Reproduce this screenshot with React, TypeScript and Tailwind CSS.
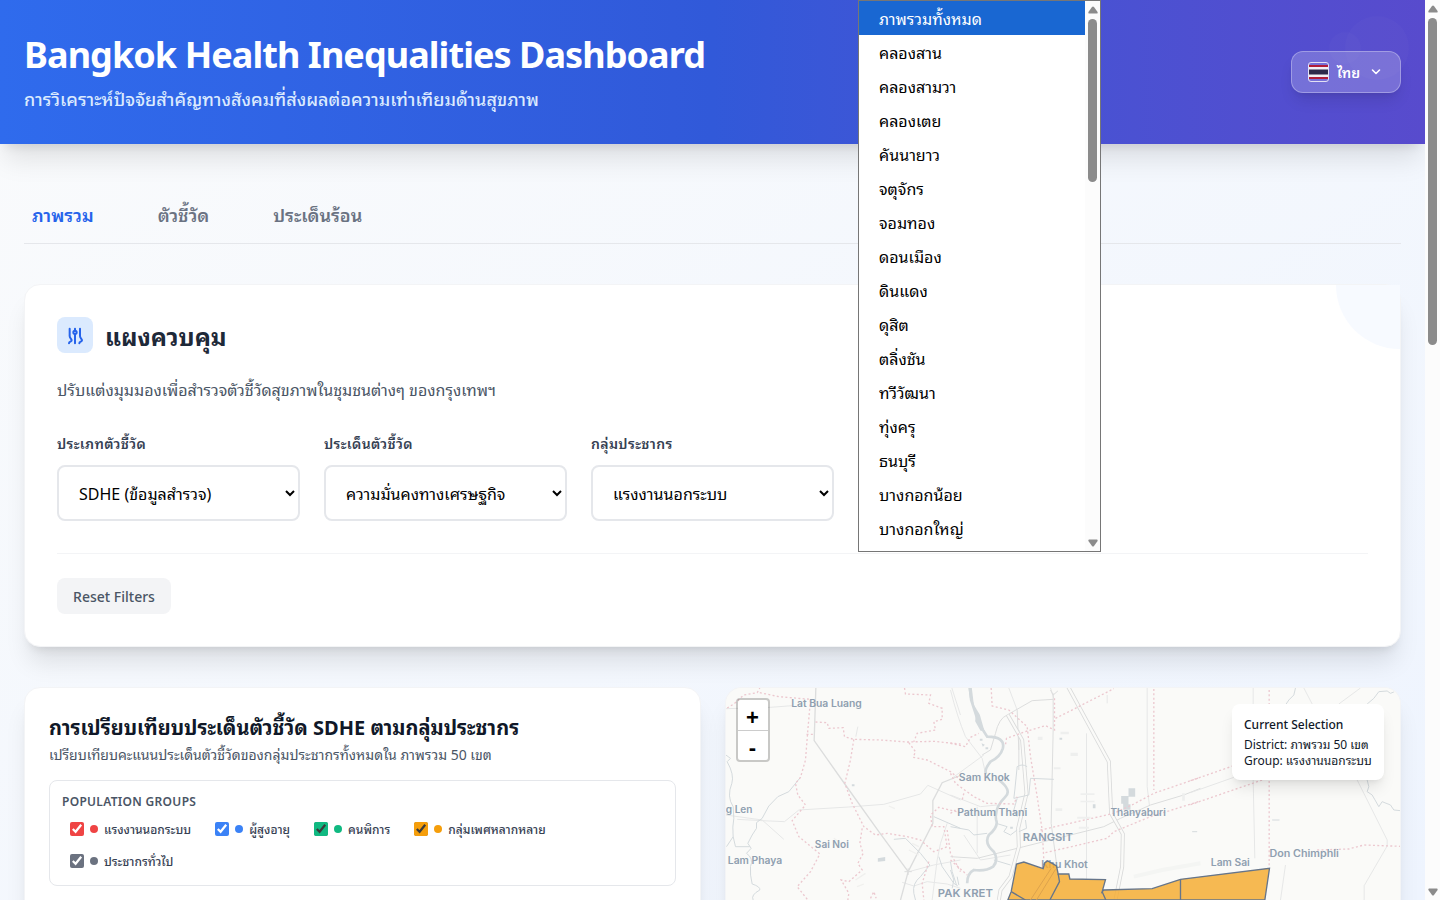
import React from "react";

const fontStack = "font-['Noto_Sans','Noto_Sans_Thai_Looped',sans-serif]";

const districts = [
  "ภาพรวมทั้งหมด", "คลองสาน", "คลองสามวา", "คลองเตย", "คันนายาว", "จตุจักร", "จอมทอง", "ดอนเมือง",
  "ดินแดง", "ดุสิต", "ตลิ่งชัน", "ทวีวัฒนา", "ทุ่งครุ", "ธนบุรี", "บางกอกน้อย", "บางกอกใหญ่",
];

const groups = [
  { label: "แรงงานนอกระบบ", box: "accent-[#ef4444]", dot: "bg-[#ef4444]" },
  { label: "ผู้สูงอายุ", box: "accent-[#3b82f6]", dot: "bg-[#3b82f6]" },
  { label: "คนพิการ", box: "accent-[#10b981]", dot: "bg-[#10b981]" },
  { label: "กลุ่มเพศหลากหลาย", box: "accent-[#f59e0b]", dot: "bg-[#f59e0b]" },
  { label: "ประชากรทั่วไป", box: "accent-[#6b7280]", dot: "bg-[#6b7280]" },
];

function Arrow({ down = false }: { down?: boolean }) {
  return (
    <svg width="10" height="8" viewBox="0 0 10 8" className={down ? "rotate-180" : ""}>
      <path d="M4 1 Q5 0 6 1 L9.6 6 Q10 7.5 9 7.5 H1 Q0 7.5 .4 6Z" fill="#8b8b8b" />
    </svg>
  );
}

function Flag() {
  return (
    <svg width="21" height="20" viewBox="0 0 21 20">
      <rect x="1" y="3" width="19" height="2" fill="#b01c38" />
      <rect x="1" y="5" width="19" height="10" fill="#f1eff5" />
      <rect x="1" y="7.5" width="19" height="5" fill="#2d2a4a" />
      <rect x="1" y="15" width="19" height="2" fill="#b01c38" />
      <rect x=".5" y=".5" width="20" height="19" rx="2.5" fill="none" stroke="#e3e0f4" />
    </svg>
  );
}

function Field({ label, value }: { label: string; value: string }) {
  return (
    <div>
      <label className="mb-[11px] block h-5 text-sm font-semibold leading-5 tracking-wide text-gray-700">{label}</label>
      <select className="block h-14 w-full rounded-lg border-2 border-gray-200 bg-white px-4 pt-0.5 text-base text-black" defaultValue={value}>
        <option>{value}</option>
      </select>
    </div>
  );
}

function BaseMap() {
  const place = { fill: "#8f9fb0", fontFamily: "Inter, sans-serif", fontWeight: 600, lengthAdjust: "spacingAndGlyphs" as const };
  const road = { fill: "none", stroke: "#dcdddd", strokeWidth: 4 };
  const thin = { fill: "none", stroke: "#e6e7e7", strokeWidth: 3 };
  const river = { fill: "none", stroke: "#d4dadd", strokeWidth: 4 };
  const border = { fill: "none", stroke: "#ecc8cf", strokeWidth: 4, strokeDasharray: "6 7" };
  return (
    <svg width="676" height="212" viewBox="0.5 0 676 212" className="block">
      <rect width="677" height="212" fill="#fafaf8" />
      <g transform="translate(-5 -8) scale(.33333)">
        <path {...thin} d="M16 86 L100 84 150 82 215 77 M50 418 L125 422 192 425 235 390 385 381 490 373 600 342 622 316 720 360 M16 405L125 420 190 478 M412 140 406 170 M565 575 L640 555 720 540 M545 607 L580 618 620 605 680 612 720 625 M680 430 660 490 650 540 635 660" />
        <path {...road} d="M286 24 L281 182 375 315 475 455 563 575 540 660 M715 288 L665 308 637 362 637 430 563 575" />
        <path {...thin} d="M694 24 720 105" />
        <path {...river} strokeWidth="3" d="M16 225 L30 235 20 245 Q42 285 34 310 Q18 350 38 380 L40 415 Q35 440 38 470 L18 500 M38 470 L45 500 88 500 M240 292 L205 335 172 350 145 378 125 415 108 428 108 445 95 465 82 490 92 505 78 520 Q100 535 90 560 Q88 585 95 612 Q120 620 118 630 Q90 645 98 660 M520 478 L555 475 600 520 628 555 600 590 Q575 610 580 640 L585 660 M640 410 L720 445 M655 530 L665 560 700 610 712 618 M690 545 L695 575 708 615" />
        <path {...border} d="M20 84 L40 72 70 45 110 38 118 24 M118 38 L175 50 270 58 262 150 255 240 240 292 225 310 232 345 255 375 215 422 235 470 298 522 270 575 230 620 262 660 M258 163 L280 163 M285 126 L320 128 325 145 368 143 372 170 400 178 480 180 560 186 640 184 720 192 M400 178 L390 240 373 310 395 370 430 440 465 465 500 460 560 470 600 480 640 515 680 500 670 440 635 440 630 405 655 382 720 398 M425 445 L418 490 428 520 412 550 425 570 385 605 362 600 385 640 382 660 M450 655 L460 635 467 655 M565 188 L585 215 578 232 620 240 690 275 720 300 M552 24 L555 42 630 45 625 70 665 85 665 118 640 125 645 150 590 160 580 185 M680 450 L690 520 720 575 M625 545 L605 610 610 660" />
        <path fill="#d4dadd" d="M394 313h8v6h-8zM472 535l22 -4v12l-22 2z" />
        <path stroke="#f0f0ee" strokeWidth="4" d="M565 510 l30 15M575 490 l20 10M405 600 l30 -20M410 620l20-8M340 475l20 15M505 378l18 8" />
        <path {...road} strokeWidth="3" d="M563 565v20M552 575h22" />
        <text {...place} x="212" y="81" fontSize="30" textLength="212">Lat Bua Luang</text>
        <text {...place} x="16" y="399" fontSize="30" textLength="80">g Len</text>
        <text {...place} x="283" y="503" fontSize="30" textLength="102">Sai Noi</text>
        <text {...place} x="22" y="553" fontSize="30" textLength="163">Lam Phaya</text>
      </g>
      <g transform="translate(225 -8) scale(.33333)">
        <path {...thin} d="M0 30 Q20 110 45 170 L95 235 105 280 M175 24 L200 90 M590 24 V320 L597 378 M470 45V70 M408 160V600 M0 345 L90 380 140 375 M0 298 L100 225 M40 465 L90 540 180 525 M300 24 310 55 M80 520 V380" />
        <path {...road} strokeWidth="3" d="M308 40 V150 L302 430 M302 430 L320 565 M308 58 L245 62 170 105 Q145 115 135 160 L120 210 95 225 M200 90 L205 210 M0 530 L80 535 220 500 340 470 460 440 510 415 600 375 700 345 750 325 M300 30 L308 45 322 33 M205 150 V270" />
        <path fill="none" stroke="#d9dada" strokeWidth="12" d="M350 15 L475 245 482 400 517 462 515 560 495 660 M172 105 L215 180 228 340 203 445 205 500 180 590 150 630 145 660" />
        <path fill="none" stroke="#fafaf8" strokeWidth="7" d="M350 15 L475 245 482 400 517 462 515 560 495 660 M172 105 L215 180 228 340 203 445 205 500 180 590 150 630 145 660" />
        <path {...river} strokeWidth="8" d="M58 24 L62 60 85 130 110 170 Q165 170 157 205 Q150 230 120 245 Q100 270 107 282 M145 300 Q185 330 165 350 Q130 385 137 420 Q145 440 115 465 Q100 490 130 515 Q145 540 128 560 Q105 575 70 570 Q50 580 50 610" />
        <path fill="#d4dadd" d="M54 24 h10 l6 50 18 30 14 50-12-2-16-28 2-25-18-45zM534 325h20v25h-20zM512 348h22v25h6v16h-22v-18h-6zM427 373h8v12h-8zM327 173h8v6h-8z" />
        <path fill="#d4dadd" d="M88 176h8v6h-8zM93 190l10 4-6 6zM105 202h8v6h-8zM179 440h8v6h-8z" />
        <path {...river} strokeWidth="3" d="M200 355 L190 390 200 410 M230 260 Q215 250 200 260 L193 330 190 355 235 345 240 295 310 298 M137 430 L170 440 160 455 180 465 200 450 M0 440 L55 450 70 465 110 460 M130 540 L180 555 M225 420 L228 445 205 455 M0 570 L10 600 5 625 M20 590 L25 615" />
        <path {...border} d="M122 24 L125 78 175 90 230 140 240 230 260 350 275 450 280 540 M312 55 L312 150 285 137 230 153 168 175 165 195 M315 115 L345 100 490 26 M610 27 V330 M270 450 L490 400 550 372 610 340 750 292 M285 518 L470 475 490 455 600 410 750 363 M0 190 L45 200 60 172 85 160 M0 280 L15 310 70 350 110 370 190 372 200 350 M40 340 L35 360 M0 540 L50 585 M0 400 L15 390" />
        <path fill="#eeefee" d="M262 170h14v10h-14zM330 155h25v8h-25zM360 218h22v10h-22zM390 340h42v5h-42zM390 362h42v5h-42zM315 385h20v8h-20zM310 262h20v6h-20zM380 410h40v6h-40zM385 440h30v6h-30zM695 340h8v22h-8z" />
        <path stroke="#f4f5f3" strokeWidth="12" fill="none" d="M550 590 L635 570 750 550" />
        <text {...place} x="25" y="303" fontSize="29" textLength="153">Sam Khok</text>
        <text {...place} x="20" y="409" fontSize="29" textLength="210">Pathum Thani</text>
        <text {...place} x="480" y="409" fontSize="29" textLength="166">Thanyaburi</text>
        <text {...place} x="217" y="483" fontSize="33" textLength="150">RANGSIT</text>
        <text {...place} x="272" y="564" fontSize="29" textLength="140">Khu Khot</text>
        <text {...place} x="-38" y="651" fontSize="33" textLength="165">PAK KRET</text>
      </g>
      <g transform="translate(465 -8) scale(.33333)">
        <path {...thin} d="M188 24 V72 M188 300 L193 535 M340 24 L365 72 M445 72 L510 24 M500 300 L590 480 590 498 521 617 V660 M0 338 L130 292 M285 555 L270 660" />
        <path {...river} strokeWidth="3" d="M315 24 L310 45 295 60 285 75 M612 35 L600 40 590 33 565 35 550 55 530 72 M530 300 L535 320 530 335 545 345 565 380 575 365 600 375 610 390 630 392 M245 420H267 M5 455H20" />
        <path {...border} d="M236 30 V560 M0 302 L130 257 M0 374 L215 300 M380 510 L475 507 520 495 630 499" />
        <text {...place} x="61" y="559" fontSize="29" textLength="117">Lam Sai</text>
        <text {...place} x="237" y="530" fontSize="29" textLength="208">Don Chimphli</text>
      </g>
      <g transform="translate(225 -8) scale(.33333)">
        <path d="M172 660 L182 635 198 552 220 546 278 566 283 548 292 543 318 558 323 582 355 582 358 597 465 599 455 635 460 630 605 626 690 598 957 565 943 660Z" fill="#f5ab2d" fillOpacity=".82" stroke="#66758a" strokeWidth="4" />
        <path d="M182 635 L225 660 M323 582 L327 605 298 660 M455 635 L466 660 M690 598 V660" fill="none" stroke="#66758a" strokeWidth="4" />
        <path d="M302 565 L240 660 M315 568 L258 660" fill="none" stroke="#dda34c" strokeWidth="3" />
      </g>
    </svg>
  );
}

export default function App() {
  return (
    <div className={`relative flex h-[900px] w-[1440px] overflow-hidden bg-white ${fontStack}`}>
      <div className="h-[900px] w-[1425px] overflow-hidden bg-linear-to-br from-[#fafbfc] to-[#eef4fe]">
        <header className="relative z-10 flex h-36 items-center justify-between bg-linear-to-r from-[#2f6bed] via-[#3159d9] to-[#584bcd] px-6 shadow-xl">
          <div className="absolute right-4 top-4 size-16 rounded-full bg-white/[0.02]" />
          <div className="absolute right-16 top-8 size-8 rounded-full bg-white/[0.02]" />
          <div>
            <h1 className="mb-2 h-[45px] text-4xl font-bold leading-[45px] tracking-[-0.026em] text-white">Bangkok Health Inequalities Dashboard</h1>
            <p className="h-7 text-lg font-medium leading-7 text-blue-100">การวิเคราะห์ปัจจัยสำคัญทางสังคมที่ส่งผลต่อความเท่าเทียมด้านสุขภาพ</p>
          </div>
          <button className="relative flex h-[42px] w-[110px] items-center rounded-xl border border-white/30 bg-white/20 pl-4 text-sm font-semibold text-white shadow-lg">
            <Flag />
            <span className="ml-2 pt-px">ไทย</span>
            <svg className="ml-auto mr-[19px]" width="10" height="8" viewBox="0 0 10 8" fill="none" stroke="currentColor" strokeWidth="1.6" strokeLinecap="round" strokeLinejoin="round"><path d="M1.5 2 5 5.5 8.5 2" /></svg>
          </button>
        </header>

        <main className="px-6 pt-10">
          <nav className="flex h-[60px] gap-16 border-b border-gray-200 pl-2 pt-[17px] text-lg font-semibold leading-7 text-gray-500">
            <span className="text-[#2563eb]">ภาพรวม</span>
            <span>ตัวชี้วัด</span>
            <span>ประเด็นร้อน</span>
          </nav>

          <section className="relative mt-10 h-[363px] rounded-2xl border border-gray-100 bg-white px-8 pt-8 shadow-xl">
            <div className="absolute right-0 top-0 size-16 rounded-bl-full rounded-tr-2xl bg-[#f7faff]" />
            <div className="flex h-9 gap-3">
              <div className="flex size-9 items-center justify-center rounded-lg bg-blue-100 pt-px">
                <svg width="18" height="18" viewBox="0 0 54 54" fill="none" stroke="#2563eb" strokeWidth="6" strokeLinecap="round">
                  <path d="M11 5V27C11 34 17 35 17 40S9 43 9 49M42 5V27C42 34 48 35 48 40S40 43 40 49M27 5V11M27 21V49" />
                  <circle cx="27" cy="16" r="5" />
                </svg>
              </div>
              <h2 className="pt-1 text-2xl font-bold leading-8 text-gray-800">แผงควบคุม</h2>
            </div>
            <p className="mt-[25px] h-6 text-base leading-6 text-gray-600">ปรับแต่งมุมมองเพื่อสำรวจตัวชี้วัดสุขภาพในชุมชนต่างๆ ของกรุงเทพฯ</p>
            <div className="mt-8 grid grid-cols-5 gap-6">
              <Field label="ประเภทตัวชี้วัด" value="SDHE (ข้อมูลสำรวจ)" />
              <Field label="ประเด็นตัวชี้วัด" value="ความมั่นคงทางเศรษฐกิจ" />
              <Field label="กลุ่มประชากร" value="แรงงานนอกระบบ" />
            </div>
            <div className="mt-8 border-t border-gray-100 pt-6">
              <button className="h-9 w-[114px] rounded-lg bg-gray-100 pt-0.5 text-sm font-medium text-gray-600">Reset Filters</button>
            </div>
          </section>

          <div className="mt-10 grid grid-cols-2 gap-6">
            <section className="h-[500px] rounded-2xl border border-gray-100 bg-white p-6 shadow-xl">
              <h3 className="mt-0.5 h-7 text-xl font-bold leading-7 text-gray-900">การเปรียบเทียบประเด็นตัวชี้วัด SDHE ตามกลุ่มประชากร</h3>
              <p className="mt-[3px] h-5 text-sm leading-5 text-gray-600">เปรียบเทียบคะแนนประเด็นตัวชี้วัดของกลุ่มประชากรทั้งหมดใน ภาพรวม 50 เขต</p>
              <div className="mt-[15px] h-[106px] rounded-lg border border-gray-200 px-3 pt-3">
                <div className="text-xs font-semibold uppercase leading-[18px] tracking-wide text-gray-600">Population Groups</div>
                <div className="mt-1.5 flex flex-wrap gap-2">
                  {groups.map((g) => (
                    <label key={g.label} className="flex h-6 items-center px-2 text-xs font-medium text-gray-700">
                      <input type="checkbox" defaultChecked className={`m-0 size-3.5 ${g.box}`} />
                      <span className={`mx-1.5 size-2 rounded-full ${g.dot}`} />
                      <span className="pt-0.5">{g.label}</span>
                    </label>
                  ))}
                </div>
              </div>
            </section>

            <section className="relative h-[500px] rounded-2xl border border-gray-100 bg-[#fafaf8] shadow-xl">
              <div className="overflow-hidden rounded-2xl"><BaseMap /></div>
              <div className="absolute left-[10px] top-[10px] flex w-[34px] flex-col rounded border-2 border-black/20 bg-clip-padding text-center text-[22px] font-bold text-black">
                <span className="h-[31px] rounded-t-sm border-b border-[#ccc] bg-white font-['Liberation_Sans'] leading-[36px]">+</span>
                <span className="h-[29px] rounded-b-sm bg-white font-['Liberation_Sans'] leading-[34px]">-</span>
              </div>
              <div className="absolute right-4 top-4 h-[76px] w-[152px] rounded-lg bg-white pl-3 pt-[13px] text-xs leading-4 text-gray-900 shadow-lg">
                <div className="mb-1 h-4 font-medium">Current Selection</div>
                <div className="h-4">District: ภาพรวม 50 เขต</div>
                <div className="h-4">Group: แรงงานนอกระบบ</div>
              </div>
            </section>
          </div>
        </main>
      </div>

      <div className="flex w-[15px] flex-col items-center bg-[#fcfcfc] pb-1 pt-[5px]">
        <Arrow />
        <div className="mt-[5px] h-[327px] w-[9px] rounded-full bg-[#8b8b8b]" />
        <div className="mt-auto"><Arrow down /></div>
      </div>

      <div className="absolute left-[858px] top-0 z-20 flex h-[552px] w-[243px] border border-[#767676] bg-white">
        <div className="flex-1 text-base text-black">
          {districts.map((d, i) => (
            <div key={d} className={i === 0 ? "h-[34px] bg-[#1967d2] pl-5 leading-[36px] text-white" : "h-[34px] pl-5 leading-[36px]"}>{d}</div>
          ))}
        </div>
        <div className="flex w-[15px] flex-col items-center bg-[#fcfcfc] pb-1 pt-[5px]">
          <Arrow />
          <div className="mt-[5px] h-[163px] w-[9px] rounded-full bg-[#8b8b8b]" />
          <div className="mt-auto"><Arrow down /></div>
        </div>
      </div>
    </div>
  );
}
